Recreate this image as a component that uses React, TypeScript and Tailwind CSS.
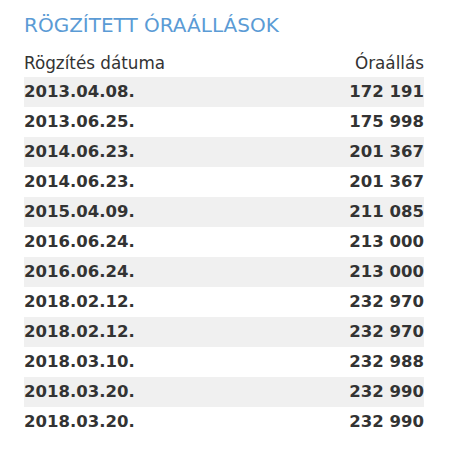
const rows: [string, string][] = [
  ['2013.04.08.', '172 191'],
  ['2013.06.25.', '175 998'],
  ['2014.06.23.', '201 367'],
  ['2014.06.23.', '201 367'],
  ['2015.04.09.', '211 085'],
  ['2016.06.24.', '213 000'],
  ['2016.06.24.', '213 000'],
  ['2018.02.12.', '232 970'],
  ['2018.02.12.', '232 970'],
  ['2018.03.10.', '232 988'],
  ['2018.03.20.', '232 990'],
  ['2018.03.20.', '232 990'],
];

export default function App() {
  return (
    <div className="w-[451px] h-[456px] bg-white px-6 pt-[13px]" style={{ fontFamily: '"DejaVu Sans", sans-serif' }}>
      <h2 className="text-[20px] leading-6 text-[#5b9bd5]">RÖGZÍTETT ÓRAÁLLÁSOK</h2>
      <table className="w-[400px] mt-[10px] text-[#333]">
        <thead>
          <tr className="h-[30px] text-[16.8px]">
            <th className="text-left font-normal pt-[3px]">Rögzítés dátuma</th>
            <th className="text-right font-normal pt-[3px]">Óraállás</th>
          </tr>
        </thead>
        <tbody>
          {rows.map(([d, v], i) => (
            <tr key={i} className={`h-[30px] text-[16.5px] font-bold ${i % 2 === 0 ? 'bg-[#f0f0f0]' : ''}`}>
              <td className="text-left">{d}</td>
              <td className="text-right">{v}</td>
            </tr>
          ))}
        </tbody>
      </table>
    </div>
  );
}
